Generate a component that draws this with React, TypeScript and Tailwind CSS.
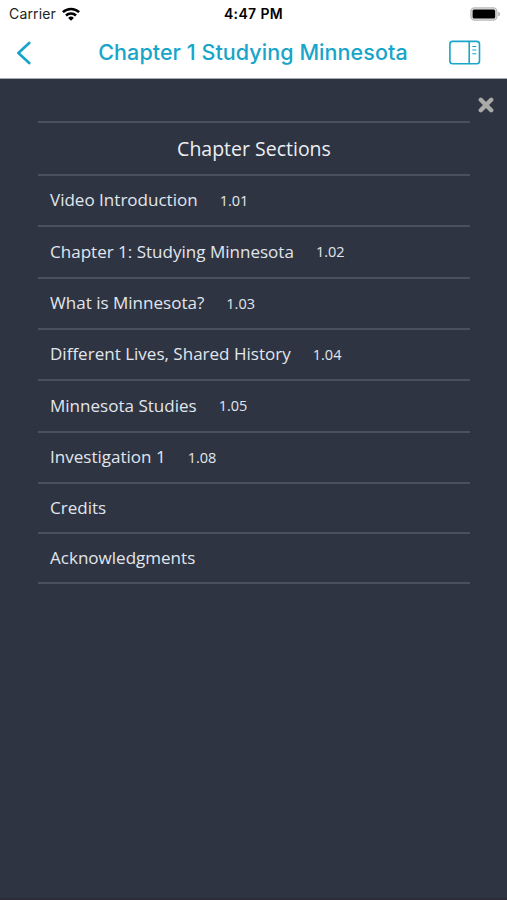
interface Section {
  title: string;
  page?: string;
  height: string;
}

const SECTIONS: Section[] = [
  { title: 'Video Introduction', page: '1.01', height: 'h-[51px]' },
  { title: 'Chapter 1: Studying Minnesota', page: '1.02', height: 'h-[52px]' },
  { title: 'What is Minnesota?', page: '1.03', height: 'h-[51px]' },
  { title: 'Different Lives, Shared History', page: '1.04', height: 'h-[51px]' },
  { title: 'Minnesota Studies', page: '1.05', height: 'h-[52px]' },
  { title: 'Investigation 1', page: '1.08', height: 'h-[51px]' },
  { title: 'Credits', height: 'h-[50px]' },
  { title: 'Acknowledgments', height: 'h-[50px]' },
];

function WifiIcon() {
  return (
    <svg className="ml-[6px] h-[14px] w-[18px]" viewBox="0 0 18 14" fill="none" stroke="#000" strokeWidth="2.5">
      <path d="M0.9 5.2a11.6 11.6 0 0 1 16.2 0" />
      <path d="M4 8.5a7.1 7.1 0 0 1 10 0" />
      <path d="M9 13.8 6.1 10.9a4.1 4.1 0 0 1 5.8 0z" fill="#000" stroke="none" />
    </svg>
  );
}

function BatteryIcon() {
  return (
    <svg className="h-[14px] w-[31px]" viewBox="0 0 31 14">
      <rect x="0.9" y="0.8" width="26" height="12.4" rx="3.6" fill="#e4e4e4" stroke="#bababa" strokeWidth="1.3" />
      <rect x="2.6" y="2.4" width="22.6" height="9.2" rx="1.6" fill="#000" />
      <path d="M28.3 4.7C30.5 5.4 30.5 8.6 28.3 9.3Z" fill="#aaa" />
    </svg>
  );
}

function CloseIcon() {
  return (
    <svg className="h-4 w-4" viewBox="0 0 16 16" fill="none" stroke="currentColor" strokeWidth="4.4" strokeLinecap="round">
      <path d="M2.800 2.800 13.200 13.200M13.200 2.800 2.800 13.200" />
    </svg>
  );
}

function StatusBar() {
  return (
    <div className="grid h-[27px] grid-cols-3 items-center pl-[9px] pr-[6px] font-['Inter','Liberation_Sans',sans-serif] text-[14px] text-[#222]">
      <div className="flex items-center">
        <span className="tracking-[0.15px]">Carrier</span>
        <WifiIcon />
      </div>
      <span className="-ml-[3px] text-center font-semibold tracking-[0.35px] text-black">4:47 PM</span>
      <div className="flex justify-end">
        <BatteryIcon />
      </div>
    </div>
  );
}

function NavBar() {
  return (
    <div className="flex h-[52px] items-center justify-between border-b border-[#a5a8ae] pl-4 pr-[26px] text-[#18a5c9]">
      <button aria-label="Back">
        <svg className="h-6 w-4" viewBox="0 0 16 24" fill="none" stroke="currentColor" strokeWidth="2.7" strokeLinecap="round" strokeLinejoin="round">
          <path d="M13.2 1.9 2.4 12 13.2 22.1" />
        </svg>
      </button>
      <h1 className="ml-[25px] whitespace-nowrap font-['Inter','Liberation_Sans',sans-serif] text-[21.5px] font-medium tracking-[0.06px]">
        Chapter 1 Studying Minnesota
      </h1>
      <button aria-label="Toggle panel">
        <svg className="h-[25px] w-8" viewBox="0 0 32 25" fill="none" stroke="currentColor" strokeWidth="1.6">
          <rect x="0.9" y="1.4" width="29.6" height="22.4" rx="2.8" />
          <path d="M20.2 1.4v22.4" />
          <path d="M23.3 6.5h4M23.3 10h4M23.3 13.8h4" strokeWidth="1.1" />
        </svg>
      </button>
    </div>
  );
}

export default function App() {
  return (
    <div className="flex h-[900px] w-[507px] flex-col overflow-hidden bg-white">
      <StatusBar />
      <NavBar />

      <main className="flex flex-1 flex-col border-b-2 border-[#2d2d39] bg-[#2e3441] font-['Open_Sans','Noto_Sans',sans-serif]">
        <div className="flex h-[42px] items-start justify-end pr-[13px] pt-[18px]">
          <button aria-label="Close" className="text-[#aaaaa8]">
            <CloseIcon />
          </button>
        </div>

        <div className="ml-[38px] mr-[37px] border-t-2 border-[#4a505e]">
          <h2 className="flex h-[53px] items-center justify-center border-b-2 border-[#4a505e] text-[19.5px] text-[#eceff4]">
            Chapter Sections
          </h2>
          <ul>
            {SECTIONS.map((s) => (
              <li
                key={s.title}
                className={`flex items-center border-b-2 border-[#4a505e] pl-3 text-[#e1e6ee] ${s.height}`}
              >
                <span className="pb-px text-[17.05px]">{s.title}</span>
                {s.page && <span className="ml-[22px] text-[14.5px]">{s.page}</span>}
              </li>
            ))}
          </ul>
        </div>
      </main>
    </div>
  );
}
